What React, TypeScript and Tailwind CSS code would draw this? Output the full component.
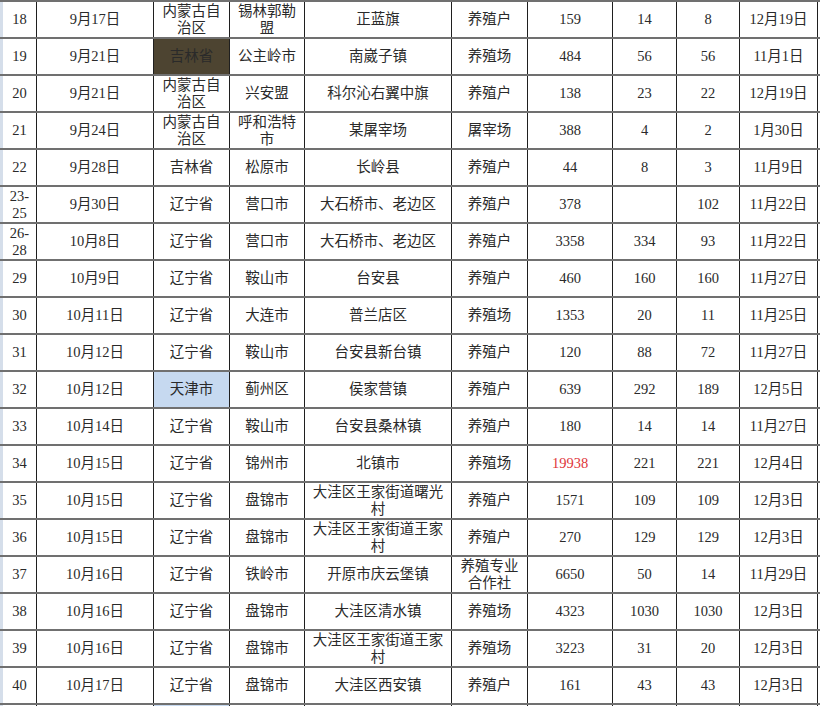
const rows: string[][] = [
  ["18", "9月17日", "内蒙古自治区", "锡林郭勒盟", "正蓝旗", "养殖户", "159", "14", "8", "12月19日"],
  ["19", "9月21日", "吉林省", "公主岭市", "南崴子镇", "养殖场", "484", "56", "56", "11月1日"],
  ["20", "9月21日", "内蒙古自治区", "兴安盟", "科尔沁右翼中旗", "养殖户", "138", "23", "22", "12月19日"],
  ["21", "9月24日", "内蒙古自治区", "呼和浩特市", "某屠宰场", "屠宰场", "388", "4", "2", "1月30日"],
  ["22", "9月28日", "吉林省", "松原市", "长岭县", "养殖户", "44", "8", "3", "11月9日"],
  ["23-25", "9月30日", "辽宁省", "营口市", "大石桥市、老边区", "养殖户", "378", "", "102", "11月22日"],
  ["26-28", "10月8日", "辽宁省", "营口市", "大石桥市、老边区", "养殖户", "3358", "334", "93", "11月22日"],
  ["29", "10月9日", "辽宁省", "鞍山市", "台安县", "养殖户", "460", "160", "160", "11月27日"],
  ["30", "10月11日", "辽宁省", "大连市", "普兰店区", "养殖场", "1353", "20", "11", "11月25日"],
  ["31", "10月12日", "辽宁省", "鞍山市", "台安县新台镇", "养殖户", "120", "88", "72", "11月27日"],
  ["32", "10月12日", "天津市", "蓟州区", "侯家营镇", "养殖户", "639", "292", "189", "12月5日"],
  ["33", "10月14日", "辽宁省", "鞍山市", "台安县桑林镇", "养殖户", "180", "14", "14", "11月27日"],
  ["34", "10月15日", "辽宁省", "锦州市", "北镇市", "养殖场", "19938", "221", "221", "12月4日"],
  ["35", "10月15日", "辽宁省", "盘锦市", "大洼区王家街道曙光村", "养殖户", "1571", "109", "109", "12月3日"],
  ["36", "10月15日", "辽宁省", "盘锦市", "大洼区王家街道王家村", "养殖户", "270", "129", "129", "12月3日"],
  ["37", "10月16日", "辽宁省", "铁岭市", "开原市庆云堡镇", "养殖专业合作社", "6650", "50", "14", "11月29日"],
  ["38", "10月16日", "辽宁省", "盘锦市", "大洼区清水镇", "养殖场", "4323", "1030", "1030", "12月3日"],
  ["39", "10月16日", "辽宁省", "盘锦市", "大洼区王家街道王家村", "养殖场", "3223", "31", "20", "12月3日"],
  ["40", "10月17日", "辽宁省", "盘锦市", "大洼区西安镇", "养殖户", "161", "43", "43", "12月3日"],
]

// cells with a fill or coloured text, keyed "row-col"
const cellBg: Record<string, string> = {
  "1-2": "bg-[#4d4431]",
  "10-2": "bg-[#c6d9f0]",
}
const redText: Record<string, boolean> = { "12-6": true }

const cols = "grid grid-cols-[37px_117px_76px_75px_147px_76px_85px_64px_63px_78px]"

export default function App() {
  return (
    <div
      className="w-[820px] h-[706px] overflow-hidden bg-white text-[14.5px] leading-[17px] text-[#2a2a2a]"
      style={{ fontFamily: '"Liberation Serif", "Noto Sans CJK SC", serif' }}
    >
      <div className="border-t-2 border-t-[#707070]">
        {rows.map((row, r) => (
          <div key={r} className={`${cols} h-[37px] border-b-2 border-b-[#707070]`}>
            {row.map((text, c) => (
              <div
                key={c}
                className={`flex items-center justify-center text-center px-[3px] border-r border-r-[#1f1f1f] ${
                  c === 0 ? "border-l-[3px] border-l-[#d5deea] px-[2px]" : ""
                } ${cellBg[`${r}-${c}`] ?? ""} ${redText[`${r}-${c}`] ? "text-[#e0353a]" : ""}`}
              >
                {text}
              </div>
            ))}
          </div>
        ))}
        {/* next row, only its top edge is visible */}
        <div className={`${cols} h-[37px]`}>
          {Array.from({ length: 10 }).map((_, c) => (
            <div
              key={c}
              className={`border-r border-r-[#1f1f1f] ${c === 0 ? "border-l-[3px] border-l-[#d5deea]" : ""} ${
                c === 2 ? "bg-[#c6d9f0]" : ""
              }`}
            />
          ))}
        </div>
      </div>
    </div>
  )
}
